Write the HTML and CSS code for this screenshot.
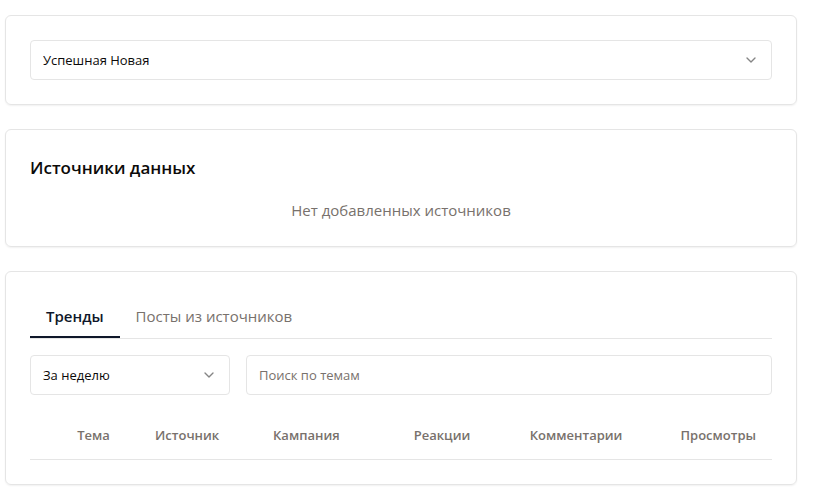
FILE: index.html
```html
<!DOCTYPE html>
<html lang="ru">
<head>
<meta charset="utf-8">
<meta name="viewport" content="width=device-width, initial-scale=1">
<title>Тренды</title>
<link rel="stylesheet" href="styles.css">
</head>
<body>
<main class="page">
  <section class="card">
    <div class="select">
      <select class="control" aria-label="Кампания">
        <option>Успешная Новая</option>
      </select>
      <svg class="chevron" viewBox="0 0 24 24" aria-hidden="true"><path d="m6 9 6 6 6-6"/></svg>
    </div>
  </section>

  <section class="card">
    <h2 class="title">Источники данных</h2>
    <p class="empty">Нет добавленных источников</p>
  </section>

  <section class="card">
    <div class="tabs" role="tablist">
      <button class="tab tab-active" type="button" role="tab" aria-selected="true">Тренды</button>
      <button class="tab" type="button" role="tab" aria-selected="false">Посты из источников</button>
    </div>
    <div class="filters">
      <div class="select select-period">
        <select class="control" aria-label="Период">
          <option>За неделю</option>
        </select>
        <svg class="chevron" viewBox="0 0 24 24" aria-hidden="true"><path d="m6 9 6 6 6-6"/></svg>
      </div>
      <input class="control search" type="search" placeholder="Поиск по темам" aria-label="Поиск по темам">
    </div>
    <table class="table">
      <colgroup>
        <col class="col-toggle"><col class="col-topic"><col class="col-source"><col class="col-campaign"><col class="col-reactions"><col class="col-comments"><col class="col-views">
      </colgroup>
      <thead>
        <tr>
          <td></td>
          <th scope="col">Тема</th>
          <th scope="col">Источник</th>
          <th scope="col">Кампания</th>
          <th scope="col" class="num">Реакции</th>
          <th scope="col" class="num">Комментарии</th>
          <th scope="col" class="num">Просмотры</th>
        </tr>
      </thead>
    </table>
  </section>
</main>
</body>
</html>
```

FILE: styles.css
```css
* {
  box-sizing: border-box;
}

body {
  margin: 0;
  background: #fff;
  color: #0c0a09;
  font-family: "Segoe UI", "Open Sans", "Noto Sans", sans-serif;
  font-size: 15px;
  line-height: 24px;
}

.page {
  display: flex;
  flex-direction: column;
  gap: 24px;
  padding: 15px 20px 11px 5px;
}

.card {
  padding: 24px;
  border: 1px solid #e5e5e5;
  border-radius: 6px;
  box-shadow: 0 1px 2px rgba(0, 0, 0, 0.06);
}

.control {
  display: block;
  width: 100%;
  height: 40px;
  margin: 0;
  padding: 0 12px;
  border: 1px solid #e5e5e5;
  border-radius: 4px;
  background: #fff;
  color: inherit;
  font: inherit;
  font-size: 13px;
  appearance: none;
}

.control::placeholder {
  color: #78716c;
  opacity: 1;
}

.select {
  position: relative;
}

.chevron {
  position: absolute;
  top: 12px;
  right: 13px;
  width: 16px;
  height: 16px;
  fill: none;
  stroke: #858585;
  stroke-width: 2;
  stroke-linecap: round;
  stroke-linejoin: round;
  pointer-events: none;
}

.title {
  margin: 0 0 16px;
  font-size: 17px;
  font-weight: 600;
  line-height: 28px;
}

.empty {
  margin: 0;
  color: #78716c;
  text-align: center;
}

.tabs {
  display: flex;
  margin-bottom: 16px;
  border-bottom: 1px solid #e5e5e5;
}

.tab {
  padding: 8px 16px;
  border: 0;
  border-bottom: 2px solid transparent;
  background: none;
  color: #78716c;
  font: inherit;
}

.tab-active {
  border-bottom-color: #0f172a;
  color: #0f172a;
  font-weight: 600;
}

.filters {
  display: flex;
  gap: 16px;
  margin-bottom: 16px;
}

.select-period {
  flex: 0 0 200px;
}

.search {
  flex: 1;
  min-width: 0;
}

.table {
  width: 100%;
  table-layout: fixed;
  border-collapse: collapse;
  color: #78716c;
  font-size: 13px;
}

.table tr {
  border-bottom: 1px solid #e5e5e5;
}

.table th {
  height: 48px;
  padding: 0 16px;
  font-weight: 600;
  text-align: left;
  white-space: nowrap;
}

.table .num {
  text-align: right;
}

.table td {
  padding: 0;
}

.col-toggle { width: 4.2%; }
.col-topic { width: 10.5%; }
.col-source { width: 15.9%; }
.col-campaign { width: 16.3%; }
.col-reactions { width: 14.6%; }
.col-comments { width: 20.5%; }
.col-views { width: 18%; }
```
